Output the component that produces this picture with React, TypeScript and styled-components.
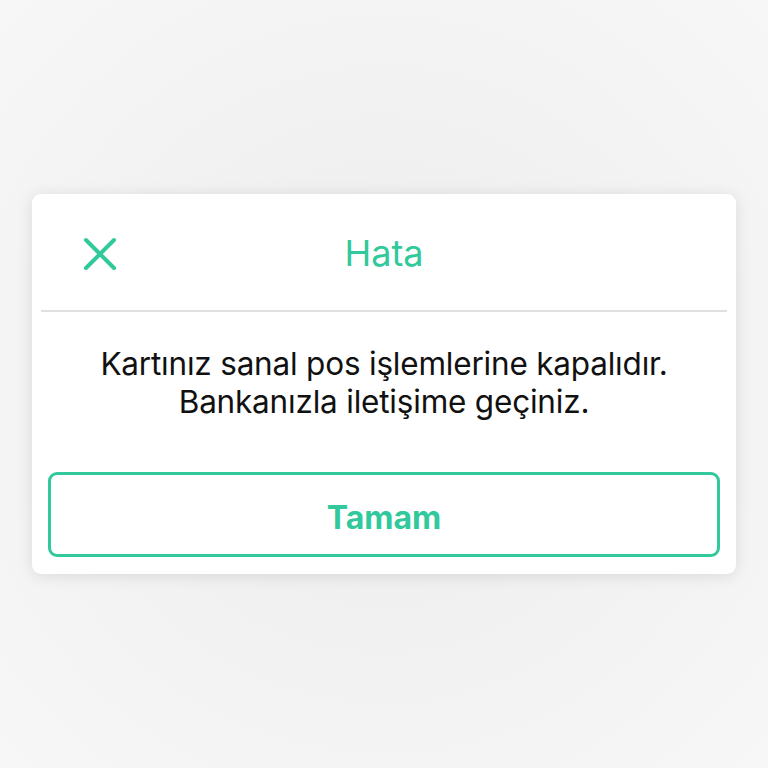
import React from "react";
import styled, { createGlobalStyle } from "styled-components";

const GlobalStyle = createGlobalStyle`
  html, body {
    margin: 0;
    padding: 0;
  }
  body {
    font-family: Inter, "Open Sans", "Liberation Sans", sans-serif;
    -webkit-font-smoothing: antialiased;
  }
`;

const GREEN = "#31c99b";

const ErrorDialog = () => {
  return (
    <>
      <GlobalStyle />
      <Page>
        <Card>
          <Header>
            <CloseButton aria-label="Kapat">
              <svg width="34" height="34" viewBox="0 0 34 34" fill="none">
                <path
                  d="M3 3 L31 31 M31 3 L3 31"
                  stroke={GREEN}
                  strokeWidth="4"
                  strokeLinecap="round"
                />
              </svg>
            </CloseButton>
            <Title>Hata</Title>
          </Header>
          <Divider />
          <Message>
            Kartınız sanal pos işlemlerine kapalıdır.
            <br />
            Bankanızla iletişime geçiniz.
          </Message>
          <Footer>
            <OkButton>Tamam</OkButton>
          </Footer>
        </Card>
      </Page>
    </>
  );
};

export default ErrorDialog;

const Page = styled.div`
  height: 768px;
  display: flex;
  align-items: center;
  justify-content: center;
  background: radial-gradient(
    ellipse at 50% 50%,
    #ebebeb 0%,
    #f1f1f1 45%,
    #f7f7f7 100%
  );
`;

const Card = styled.div`
  width: 704px;
  background: #fff;
  border-radius: 9px;
  box-shadow: 0 2px 16px rgba(0, 0, 0, 0.11);
  display: flex;
  flex-direction: column;
`;

const Header = styled.div`
  position: relative;
  height: 116px;
  display: flex;
  align-items: center;
  justify-content: center;
`;

const CloseButton = styled.button`
  position: absolute;
  left: 51px;
  top: 43px;
  width: 34px;
  height: 34px;
  padding: 0;
  border: none;
  background: none;
  display: flex;
`;

const Title = styled.h1`
  margin: 0;
  font-size: 36px;
  font-weight: 400;
  color: ${GREEN};
  padding-top: 2px;
`;

const Divider = styled.div`
  height: 2px;
  margin: 0 9px;
  background: #e0e0e0;
`;

const Message = styled.p`
  margin: 0;
  padding-top: 33px;
  font-size: 31.5px;
  line-height: 38px;
  letter-spacing: -0.2px;
  color: #111;
  text-align: center;
`;

const Footer = styled.div`
  padding: 51px 16px 17px;
`;

const OkButton = styled.button`
  width: 100%;
  height: 85px;
  padding: 5px 0 0;
  border: 3px solid ${GREEN};
  border-radius: 9px;
  background: #fff;
  color: ${GREEN};
  font-family: inherit;
  font-size: 32px;
  font-weight: 700;
`;
